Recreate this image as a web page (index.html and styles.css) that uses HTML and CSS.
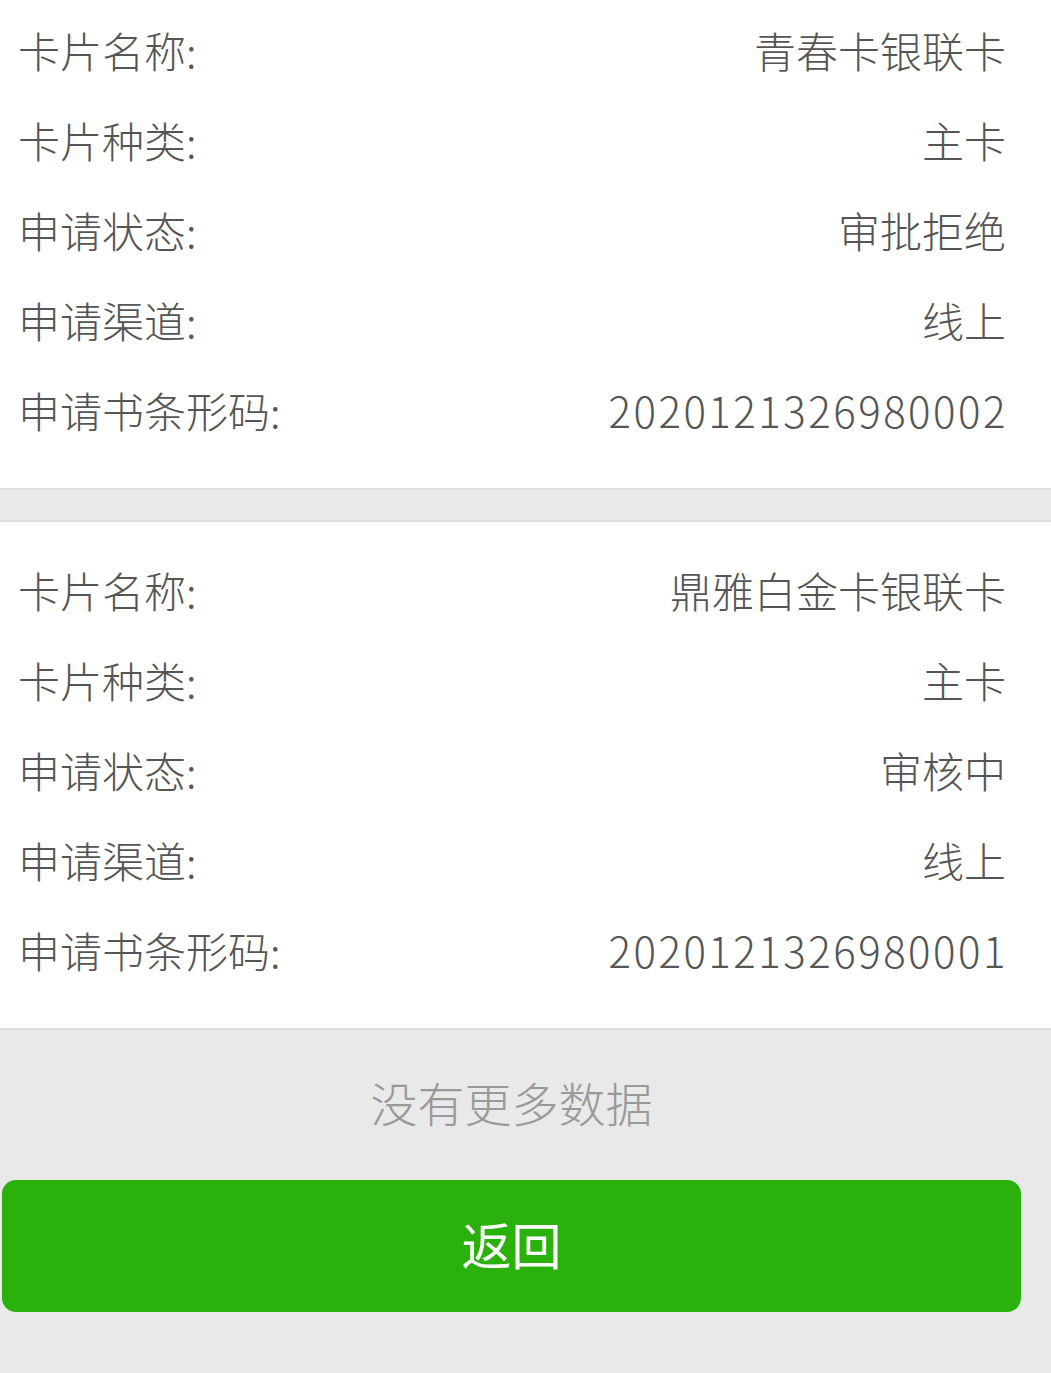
FILE: index.html
```html
<!DOCTYPE html>
<html lang="zh-CN">
<head>
    <meta charset="UTF-8">
    <meta name="viewport" content="width=device-width, initial-scale=1.0">
    <title>申请进度查询</title>
    <link rel="stylesheet" href="styles.css">
</head>
<body>
    <div class="list">
        <div class="card">
            <div class="row"><span class="label">卡片名称:</span><span class="value">青春卡银联卡</span></div>
            <div class="row"><span class="label">卡片种类:</span><span class="value">主卡</span></div>
            <div class="row"><span class="label">申请状态:</span><span class="value">审批拒绝</span></div>
            <div class="row"><span class="label">申请渠道:</span><span class="value">线上</span></div>
            <div class="row"><span class="label">申请书条形码:</span><span class="value num">2020121326980002</span></div>
        </div>
        <div class="card">
            <div class="row"><span class="label">卡片名称:</span><span class="value">鼎雅白金卡银联卡</span></div>
            <div class="row"><span class="label">卡片种类:</span><span class="value">主卡</span></div>
            <div class="row"><span class="label">申请状态:</span><span class="value">审核中</span></div>
            <div class="row"><span class="label">申请渠道:</span><span class="value">线上</span></div>
            <div class="row"><span class="label">申请书条形码:</span><span class="value num">2020121326980001</span></div>
        </div>
    </div>
    <div class="footer">
        <div class="no-more">没有更多数据</div>
        <button class="back-btn">返回</button>
    </div>
</body>
</html>
```

FILE: styles.css
```css
body {
    margin: 0;
    background-color: #e8e9e8;
    font-family: "Noto Sans CJK SC", "Noto Sans", sans-serif;
    overflow: hidden;
}
.list {
    display: flex;
    flex-direction: column;
    gap: 30px;
}
.card {
    background: #fff;
    border-top: 2px solid #dedede;
    border-bottom: 2px solid #dedede;
    padding: 25px 0 31px;
}
.card:first-child {
    margin-top: -20px;
}
.row {
    box-sizing: border-box;
    display: flex;
    justify-content: space-between;
    align-items: center;
    height: 90px;
    padding: 0 45px 6px 18px;
    font-size: 42px;
    font-weight: 300;
    color: #555;
}
.num {
    letter-spacing: 2.5px;
    margin-right: -2px;
}
.footer {
    width: 1023px;
}
.no-more {
    box-sizing: border-box;
    height: 150px;
    line-height: 144px;
    text-align: center;
    font-size: 47px;
    font-weight: 300;
    color: #999;
}
.back-btn {
    display: block;
    width: 1019px;
    height: 132px;
    margin-left: 2px;
    padding: 0 0 6px;
    background: #2bb10c;
    color: #fff;
    border: none;
    border-radius: 14px;
    font-family: inherit;
    font-size: 50px;
    font-weight: 400;
    cursor: pointer;
}
```
